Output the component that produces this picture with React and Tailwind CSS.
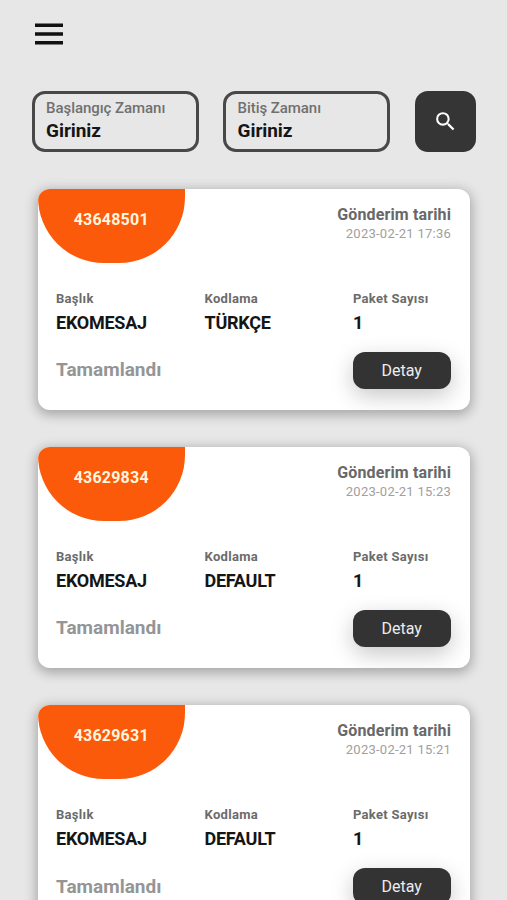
import React from 'react';

const messages = [
  { id: '43648501', date: '2023-02-21 17:36', title: 'EKOMESAJ', encoding: 'TÜRKÇE', packets: 1 },
  { id: '43629834', date: '2023-02-21 15:23', title: 'EKOMESAJ', encoding: 'DEFAULT', packets: 1 },
  { id: '43629631', date: '2023-02-21 15:21', title: 'EKOMESAJ', encoding: 'DEFAULT', packets: 1 },
];

const DateField = ({ label, value }) => (
  <button className="flex w-[167px] h-[61.5px] shrink-0 flex-col rounded-[13px] border-3 border-[#484848] pt-[3px] pl-[11.5px] text-left">
    <span className="block text-[15px] leading-[22px] font-medium tracking-[-0.05px] text-[#707070]">{label}</span>
    <span className="block text-[19px] leading-6 font-bold tracking-[-0.05px] text-[#151515]">{value}</span>
  </button>
);

const Field = ({ label, value }) => (
  <div className="w-[148.5px] shrink-0">
    <p className="text-[13px] leading-4 font-bold tracking-[0.3px] text-[#6b6b6b]">{label}</p>
    <p className="mt-1.5 text-lg leading-5 font-bold tracking-[-0.25px] text-[#151515]">{value}</p>
  </div>
);

const MessageCard = ({ message }) => (
  <div className="h-[221.5px] shrink-0 overflow-hidden rounded-xl bg-white shadow-[0_3px_12px_2px_rgba(0,0,0,0.28)]">
    <div className="flex h-[74px] justify-between">
      <div className="flex h-[74px] w-[147.5px] justify-center rounded-b-[66px] bg-[#fb5a0b] pt-5">
        <span className="text-base leading-[22px] font-bold tracking-[0.2px] text-[#fff6df]">{message.id}</span>
      </div>
      <div className="pt-4 pr-[19px] text-right">
        <p className="text-base leading-5 font-bold tracking-[0.13px] text-[#686868]">Gönderim tarihi</p>
        <p className="text-[13px] leading-[18px] tracking-[0.25px] text-[#a0a0a0]">{message.date}</p>
      </div>
    </div>

    <div className="mt-7 flex pl-[18.5px]">
      <Field label="Başlık" value={message.title} />
      <Field label="Kodlama" value={message.encoding} />
      <Field label="Paket Sayısı" value={message.packets} />
    </div>

    <div className="mt-[19px] flex items-center justify-between pr-[19px] pl-[18.5px]">
      <span className="text-[19px] leading-6 font-bold text-[#959595]">Tamamlandı</span>
      <button className="h-[37px] w-[98.5px] rounded-xl bg-[#333333] pt-px text-base text-[#ececec] shadow-[0_7px_22px_rgba(0,0,0,0.22)]">
        Detay
      </button>
    </div>
  </div>
);

const App = () => {
  return (
    <div className="flex h-[900px] w-full flex-col overflow-hidden bg-[#e7e7e7] font-[Roboto,sans-serif]">
      <header className="h-[90.5px] shrink-0 pt-[13px] pl-7">
        <svg className="size-[42px]" viewBox="0 0 24 24" fill="#111111">
          <path d="M4 18h16v-2H4v2zm0-5h16v-2H4v2zm0-7v2h16V6H4z" />
        </svg>
      </header>

      <div className="flex shrink-0 gap-[24.5px] pl-[31.5px]">
        <DateField label="Başlangıç Zamanı" value="Giriniz" />
        <DateField label="Bitiş Zamanı" value="Giriniz" />
        <button className="flex h-[61.5px] w-[61.5px] shrink-0 items-center justify-center rounded-[13px] bg-[#353535]">
          <svg className="size-[25px]" viewBox="0 0 24 24" fill="#ffffff">
            <path d="M15.5 14h-.79l-.28-.27A6.47 6.47 0 0 0 16 9.5 6.5 6.5 0 1 0 9.5 16c1.61 0 3.09-.59 4.23-1.57l.27.28v.79l5 4.99L20.49 19l-4.99-5zm-6 0C7.01 14 5 11.99 5 9.5S7.01 5 9.5 5 14 7.01 14 9.5 11.99 14 9.5 14z" />
          </svg>
        </button>
      </div>

      <div className="flex flex-col gap-[36.7px] pt-[36.7px] pr-[37px] pl-[37.5px]">
        {messages.map((message) => (
          <MessageCard key={message.id} message={message} />
        ))}
      </div>
    </div>
  );
};

export default App;
